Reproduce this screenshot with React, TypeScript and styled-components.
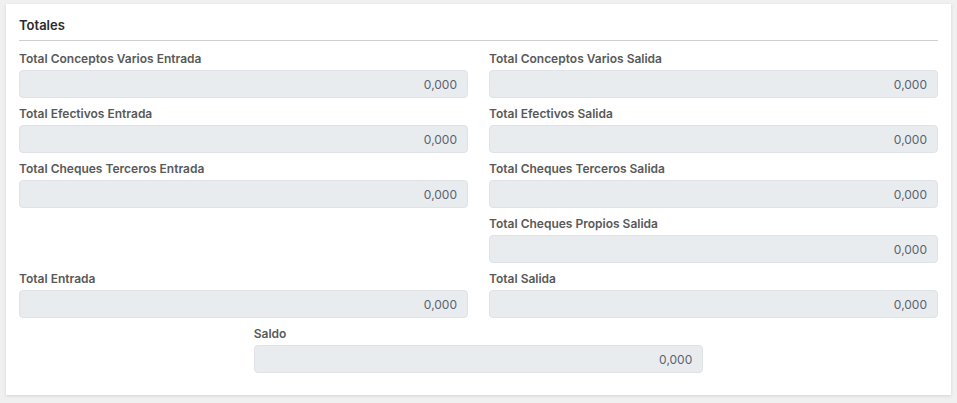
import React from 'react';
import styled, { createGlobalStyle } from 'styled-components';

const GlobalStyle = createGlobalStyle`
  html, body {
    margin: 0;
    padding: 0;
    background: #f0f0f0;
    font-family: Inter, 'Noto Sans', sans-serif;
  }
`;

const Page = styled.div`
  padding: 4px 6px 8px 6px;
`;

const Card = styled.section`
  background: #ffffff;
  box-shadow: 0 1px 3px rgba(0, 0, 0, 0.12);
  padding: 13px 13px 23px 13px;
  height: 391px;
  box-sizing: border-box;
`;

const Title = styled.h3`
  margin: 0;
  font-size: 13px;
  line-height: 16px;
  font-weight: 600;
  color: #2b2b2b;
  padding: 0 0 7px 0;
  border-bottom: 1px solid #cfcfcf;
  margin-bottom: 11px;
`;

const Grid = styled.div`
  display: grid;
  grid-template-columns: 1fr 1fr;
  column-gap: 21px;
  row-gap: 9px;
`;

const Field = styled.div<{ $col?: number; $center?: boolean }>`
  display: flex;
  flex-direction: column;
  gap: 4px;
  grid-column: ${p => (p.$center ? '1 / span 2' : p.$col ? `${p.$col}` : 'auto')};
  ${p => p.$center && 'width: calc(50% - 10px); justify-self: center;'}
`;

const Label = styled.label`
  font-size: 12px;
  font-weight: 600;
  color: #595959;
  line-height: 14px;
`;

const Value = styled.div`
  height: 28px;
  box-sizing: border-box;
  background: #e9ecef;
  border: 1px solid #dfe2e6;
  border-radius: 4px;
  display: flex;
  align-items: center;
  justify-content: flex-end;
  padding-right: 10px;
  font-size: 12px;
  color: #5a6270;
`;

const Spacer = styled.div``;

const Total: React.FC<{ label: string; col?: number; center?: boolean }> = ({ label, col, center }) => (
  <Field $col={col} $center={center}>
    <Label>{label}</Label>
    <Value>0,000</Value>
  </Field>
);

export default function App() {
  return (
    <Page>
      <GlobalStyle />
      <Card>
        <Title>Totales</Title>
        <Grid>
          <Total label="Total Conceptos Varios Entrada" />
          <Total label="Total Conceptos Varios Salida" />
          <Total label="Total Efectivos Entrada" />
          <Total label="Total Efectivos Salida" />
          <Total label="Total Cheques Terceros Entrada" />
          <Total label="Total Cheques Terceros Salida" />
          <Spacer />
          <Total label="Total Cheques Propios Salida" col={2} />
          <Total label="Total Entrada" />
          <Total label="Total Salida" />
          <Total label="Saldo" center />
        </Grid>
      </Card>
    </Page>
  );
}
